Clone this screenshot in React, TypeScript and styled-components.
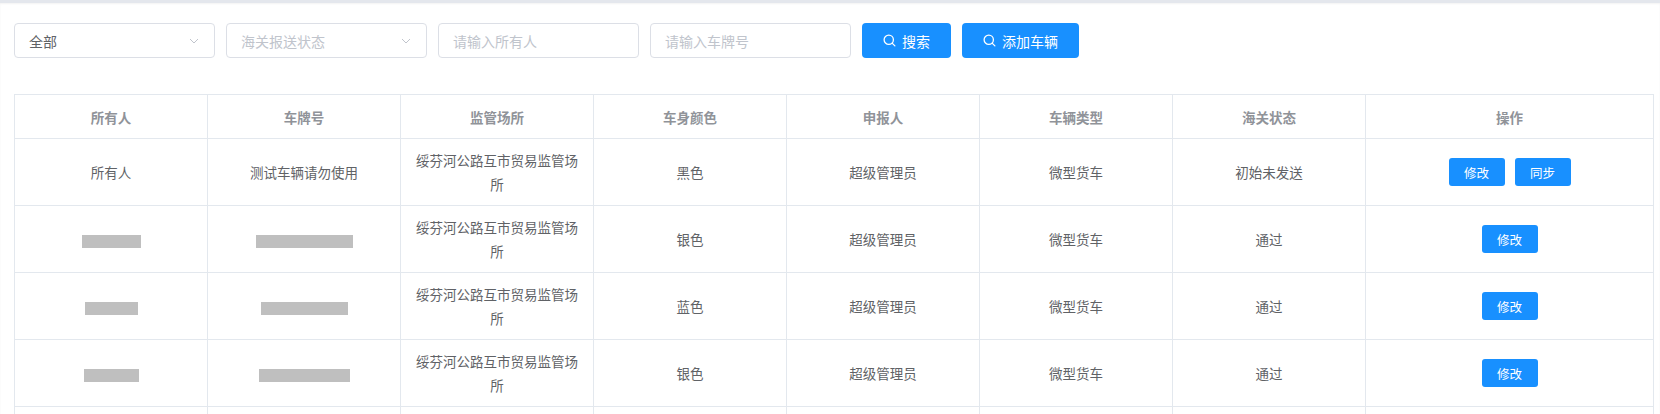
import styled, { createGlobalStyle } from 'styled-components';

const GlobalStyle = createGlobalStyle`
	body {
		margin: 0;
		background: #fff;
		font-family: "Noto Sans CJK SC", "Liberation Sans", sans-serif;
	}
`;

const Page = styled.div`
	border-top: 3px solid #e4e7ed;
	box-shadow: inset 0 1px 2px rgba(0, 0, 0, 0.05);
	padding: 20px 14px 0 14px;
`;

const Toolbar = styled.div`
	display: flex;
	gap: 11px;
	align-items: center;
`;

const Field = styled.div<{ $filled?: boolean }>`
	box-sizing: border-box;
	width: 201px;
	height: 35px;
	border: 1px solid #dcdfe6;
	border-radius: 4px;
	display: flex;
	align-items: center;
	justify-content: space-between;
	padding: 0 14px;
	font-size: 14px;
	color: ${(p) => (p.$filled ? '#606266' : '#c0c4cc')};
`;

const Button = styled.button<{ $w: number }>`
	height: 35px;
	width: ${(p) => p.$w}px;
	border: none;
	border-radius: 4px;
	background: #1890ff;
	color: #fff;
	font-size: 14px;
	font-family: inherit;
	display: flex;
	align-items: center;
	justify-content: center;
	gap: 6px;
`;

const Table = styled.table`
	margin-top: 36px;
	width: 1640px;
	border-collapse: collapse;
	table-layout: fixed;
	font-size: 13.5px;
	color: #606266;
	td, th {
		border: 1px solid #e3e8ee;
		text-align: center;
		padding: 0 10px;
		line-height: 24px;
	}
	th {
		height: 43px;
		color: #909399;
		font-weight: bold;
	}
	td {
		height: 66px;
	}
`;

const Redact = styled.span<{ $w: number }>`
	display: inline-block;
	width: ${(p) => p.$w}px;
	height: 13px;
	background: #bfbfbf;
	vertical-align: middle;
`;

const SmallButton = styled.button`
	height: 28px;
	width: 56px;
	border: none;
	border-radius: 3px;
	background: #1890ff;
	color: #fff;
	font-size: 12.5px;
	font-family: inherit;
	margin: 0 5px;
`;

const Chevron = () => (
	<svg width="12" height="12" viewBox="0 0 12 12">
		<path d="M2 4l4 4 4-4" fill="none" stroke="#c0c4cc" strokeWidth="1" />
	</svg>
);

const SearchIcon = () => (
	<svg width="13" height="13" viewBox="0 0 14 14">
		<circle cx="6.2" cy="6.2" r="5" fill="none" stroke="#fff" strokeWidth="1.4" />
		<path d="M9.8 9.8l3 3" stroke="#fff" strokeWidth="1.4" strokeLinecap="round" />
	</svg>
);

const rows = [
	{ owner: '所有人', plate: '测试车辆请勿使用', color: '黑色', status: '初始未发送', sync: true, ow: 0, pw: 0 },
	{ owner: '', plate: '', color: '银色', status: '通过', sync: false, ow: 59, pw: 97 },
	{ owner: '', plate: '', color: '蓝色', status: '通过', sync: false, ow: 53, pw: 87 },
	{ owner: '', plate: '', color: '银色', status: '通过', sync: false, ow: 55, pw: 91 },
];

const App = () => (
	<>
		<GlobalStyle />
		<Page>
			<Toolbar>
				<Field $filled>全部<Chevron /></Field>
				<Field>海关报送状态<Chevron /></Field>
				<Field>请输入所有人</Field>
				<Field>请输入车牌号</Field>
				<Button $w={89}><SearchIcon />搜索</Button>
				<Button $w={117}><SearchIcon />添加车辆</Button>
			</Toolbar>
			<Table>
				<colgroup>
					{[0, 1, 2, 3, 4, 5, 6].map((i) => <col key={i} style={{ width: 193 }} />)}
					<col />
				</colgroup>
				<thead>
					<tr>
						<th>所有人</th>
						<th>车牌号</th>
						<th>监管场所</th>
						<th>车身颜色</th>
						<th>申报人</th>
						<th>车辆类型</th>
						<th>海关状态</th>
						<th>操作</th>
					</tr>
				</thead>
				<tbody>
					{rows.map((r, i) => (
						<tr key={i}>
							<td>{r.ow ? <Redact $w={r.ow} /> : r.owner}</td>
							<td>{r.pw ? <Redact $w={r.pw} /> : r.plate}</td>
							<td>绥芬河公路互市贸易监管场所</td>
							<td>{r.color}</td>
							<td>超级管理员</td>
							<td>微型货车</td>
							<td>{r.status}</td>
							<td>
								<SmallButton>修改</SmallButton>
								{r.sync && <SmallButton>同步</SmallButton>}
							</td>
						</tr>
					))}
					<tr><td /><td /><td /><td /><td /><td /><td /><td /></tr>
				</tbody>
			</Table>
		</Page>
	</>
);

export default App;
